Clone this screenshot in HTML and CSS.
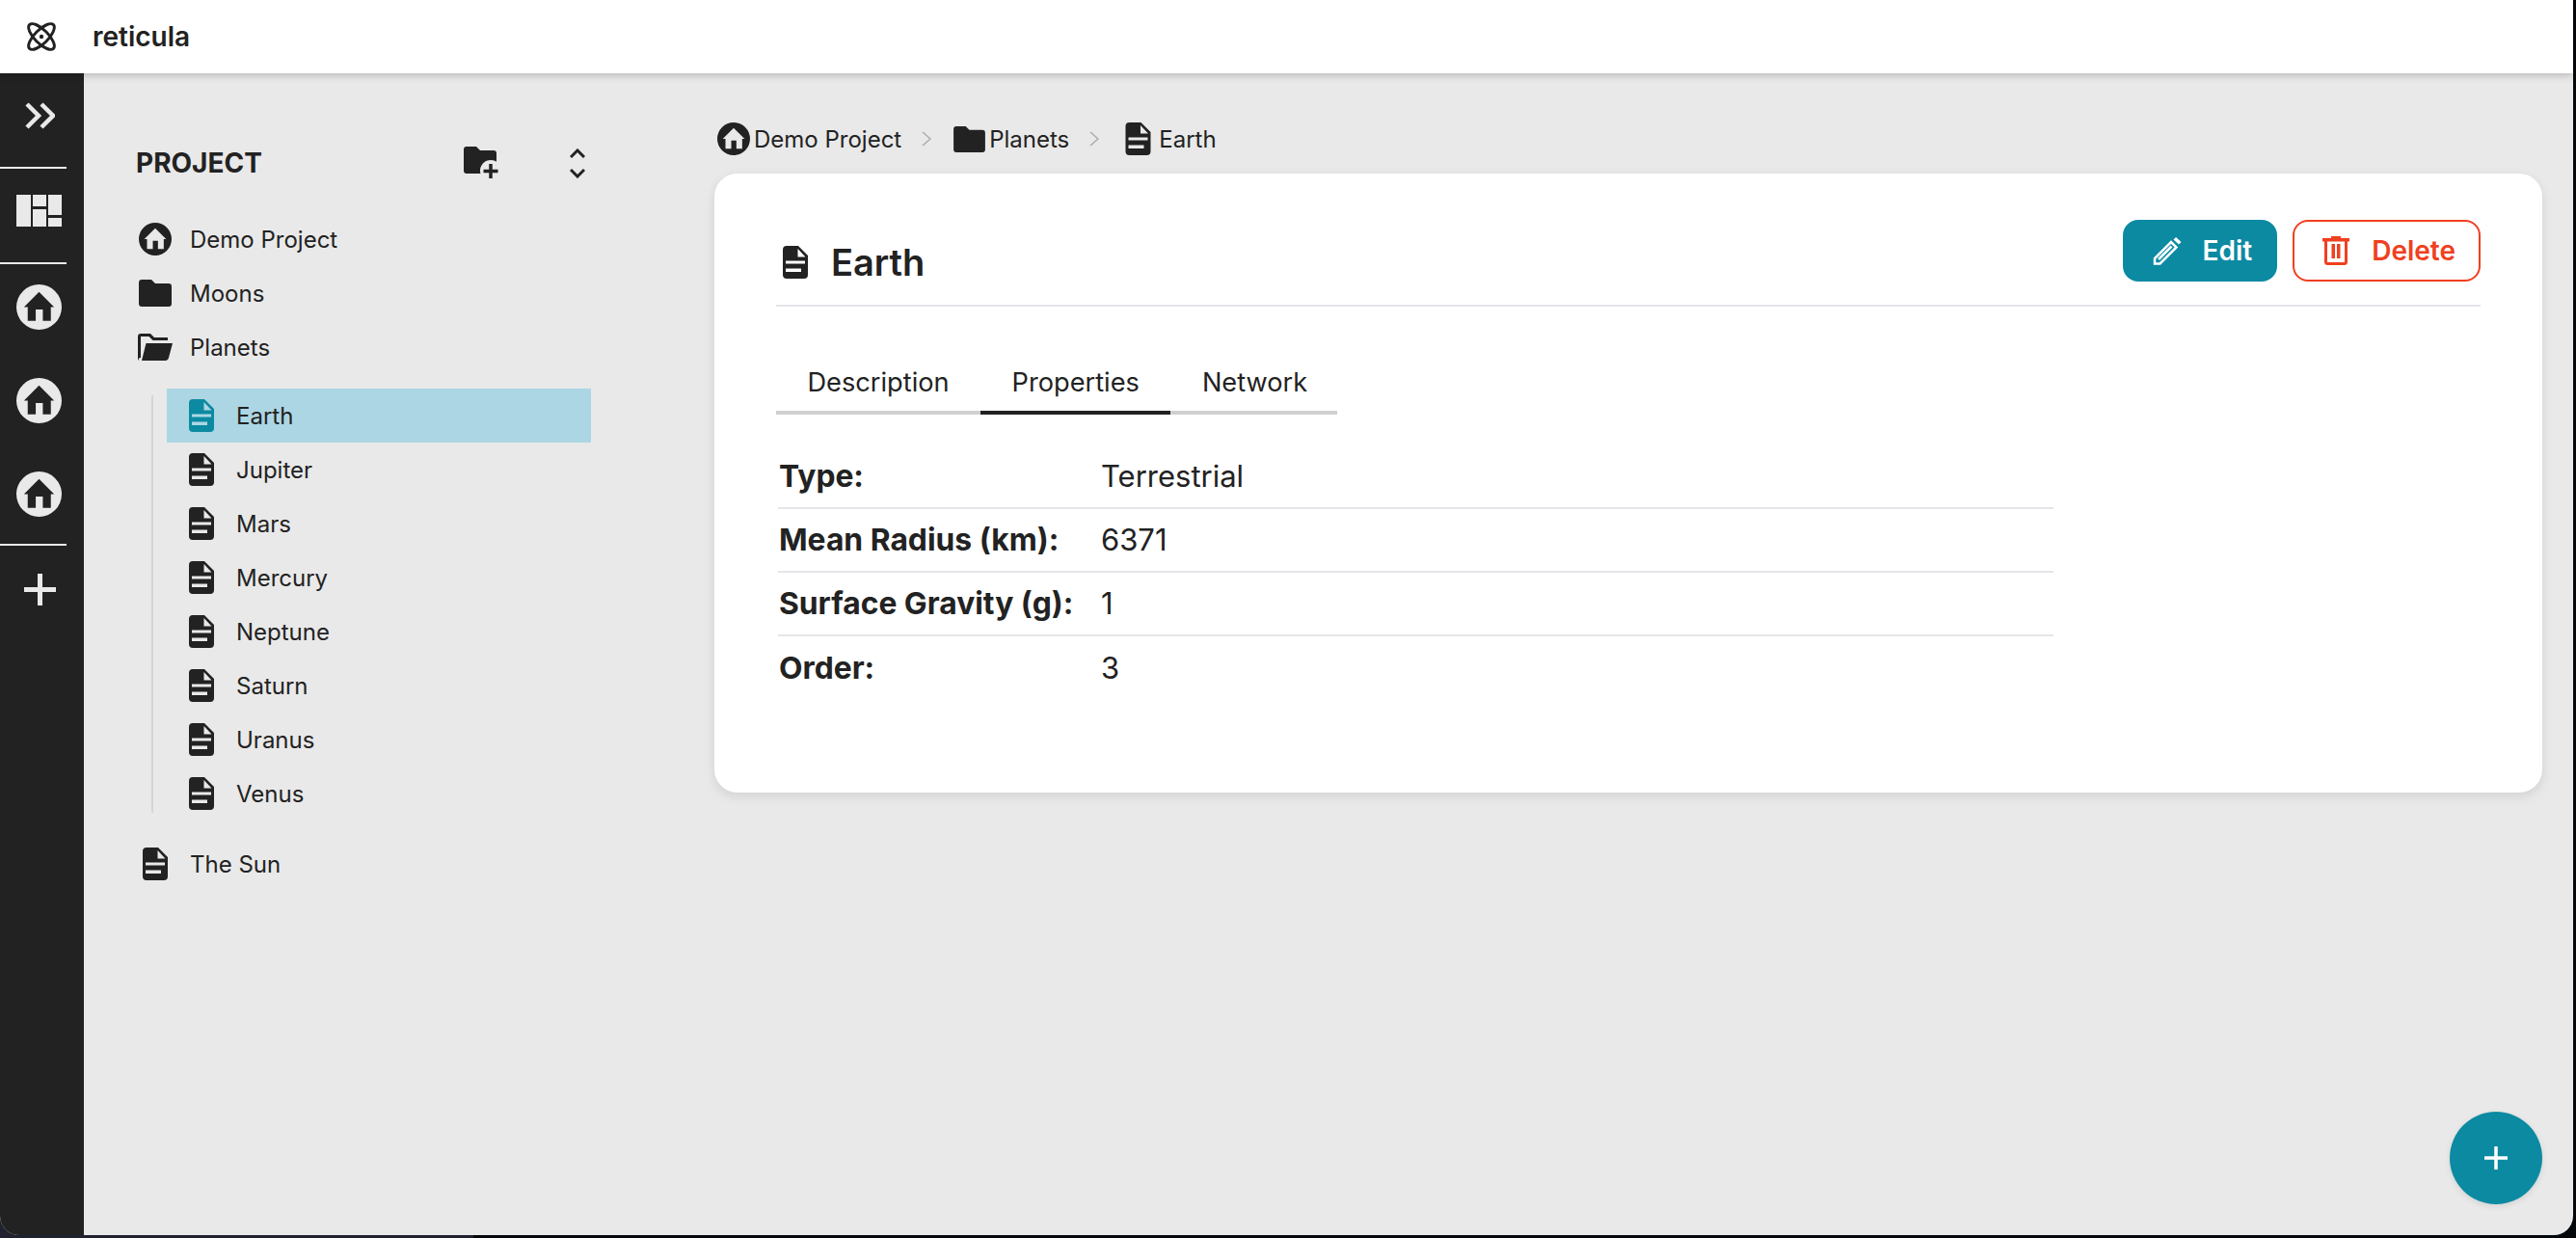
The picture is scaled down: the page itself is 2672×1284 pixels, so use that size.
FILE: index.html
```html
<!DOCTYPE html>
<html lang="en">
<head>
    <meta charset="UTF-8">
    <meta name="viewport" content="width=device-width, initial-scale=1.0">
    <title>reticula</title>
    <link rel="stylesheet" href="styles.css">
</head>
<body>
    <svg class="icon-defs" width="0" height="0">
        <symbol id="i-file" viewBox="0 0 26 34">
            <path fill="currentColor" fill-rule="evenodd" d="M4 0H16L26 10V30A4 4 0 0 1 22 34H4A4 4 0 0 1 0 30V4A4 4 0 0 1 4 0ZM15.500 3V11.500H23.500ZM3 15.500V18.500H23V15.500ZM3 23.500V27H19V23.500Z"/>
        </symbol>
        <symbol id="i-home" viewBox="0 0 48 48">
            <path fill="currentColor" fill-rule="evenodd" d="M24 0A24 24 0 1 1 24 48A24 24 0 1 1 24 0ZM24 8L8 24H12V38.500H20.500V26.500H28V38.500H36.500V24H40Z"/>
        </symbol>
        <symbol id="i-folder" viewBox="0 0 34 28">
            <path fill="currentColor" d="M3 0H13L17 4H31A3 3 0 0 1 34 7V25A3 3 0 0 1 31 28H3A3 3 0 0 1 0 25V3A3 3 0 0 1 3 0Z"/>
        </symbol>
        <symbol id="i-folder-open" viewBox="0 0 36 28">
            <path fill="currentColor" d="M3 0H13L17 4H31V7H15.500L11.500 3H3V25A1 1 0 0 0 2 28A2.500 2.500 0 0 1 0 25V3A3 3 0 0 1 3 0Z"/>
            <path fill="currentColor" d="M8.500 10H36L32 25A3.500 3.500 0 0 1 29 28H4Z"/>
        </symbol>
    </svg>

    <div class="window">
        <header class="topbar">
            <svg class="logo" viewBox="0 0 30 30">
                <ellipse cx="15" cy="15" rx="17.500" ry="7" transform="rotate(45 15 15)"/>
                <ellipse cx="15" cy="15" rx="17.500" ry="7" transform="rotate(-45 15 15)"/>
                <circle class="logo-dot" cx="15" cy="15" r="2.200"/>
            </svg>
            <span class="brand">reticula</span>
        </header>

        <div class="workspace">
            <nav class="rail">
                <div class="rail-section rail-toggle">
                    <svg class="rail-chevrons" viewBox="0 0 31 28"><path d="M2 2L14 14L2 26M17 2L29 14L17 26"/></svg>
                </div>
                <div class="rail-rule"></div>
                <div class="rail-section rail-boards">
                    <svg class="rail-grid" viewBox="0 0 47 33">
                        <rect x="0" y="0" width="15" height="33"/>
                        <rect x="17" y="0" width="14" height="12"/>
                        <rect x="17" y="15" width="14" height="18"/>
                        <rect x="33" y="0" width="14" height="21"/>
                        <rect x="33" y="24" width="14" height="9"/>
                    </svg>
                </div>
                <div class="rail-rule"></div>
                <div class="rail-section rail-projects">
                    <svg class="rail-home"><use href="#i-home"/></svg>
                    <svg class="rail-home"><use href="#i-home"/></svg>
                    <svg class="rail-home"><use href="#i-home"/></svg>
                </div>
                <div class="rail-rule"></div>
                <div class="rail-section rail-add">
                    <svg class="rail-plus" viewBox="0 0 33 33"><path d="M16.500 0V33M0 16.500H33"/></svg>
                </div>
            </nav>

            <aside class="tree-panel">
                <div class="tree-head">
                    <span class="tree-title">PROJECT</span>
                    <svg class="add-folder" viewBox="0 0 37 34">
                        <path class="add-folder-body" d="M3 0H13L17 4H31A3 3 0 0 1 34 7V25A3 3 0 0 1 31 28H3A3 3 0 0 1 0 25V3A3 3 0 0 1 3 0Z"/>
                        <circle class="add-folder-cut" cx="28" cy="25" r="11"/>
                        <path class="add-folder-plus" d="M28 18V33M20.500 25.500H35.500"/>
                    </svg>
                    <svg class="unfold" viewBox="0 0 16 31"><path d="M1 9L8 2L15 9M1 22L8 29L15 22"/></svg>
                </div>

                <ul class="tree">
                    <li class="tree-row"><span class="tree-icon"><svg class="ic-home"><use href="#i-home"/></svg></span>Demo Project</li>
                    <li class="tree-row"><span class="tree-icon"><svg class="ic-folder"><use href="#i-folder"/></svg></span>Moons</li>
                    <li class="tree-row"><span class="tree-icon"><svg class="ic-folder-open"><use href="#i-folder-open"/></svg></span>Planets</li>
                </ul>
                <ul class="subtree">
                    <li class="sub-row selected"><svg class="ic-file"><use href="#i-file"/></svg>Earth</li>
                    <li class="sub-row"><svg class="ic-file"><use href="#i-file"/></svg>Jupiter</li>
                    <li class="sub-row"><svg class="ic-file"><use href="#i-file"/></svg>Mars</li>
                    <li class="sub-row"><svg class="ic-file"><use href="#i-file"/></svg>Mercury</li>
                    <li class="sub-row"><svg class="ic-file"><use href="#i-file"/></svg>Neptune</li>
                    <li class="sub-row"><svg class="ic-file"><use href="#i-file"/></svg>Saturn</li>
                    <li class="sub-row"><svg class="ic-file"><use href="#i-file"/></svg>Uranus</li>
                    <li class="sub-row"><svg class="ic-file"><use href="#i-file"/></svg>Venus</li>
                </ul>
                <ul class="tree">
                    <li class="tree-row"><span class="tree-icon"><svg class="ic-file"><use href="#i-file"/></svg></span>The Sun</li>
                </ul>
            </aside>

            <main class="content">
                <div class="crumbs">
                    <svg class="ic-home"><use href="#i-home"/></svg>
                    <span>Demo Project</span>
                    <svg class="crumb-sep" viewBox="0 0 10 16"><path d="M1 1L9 8L1 15"/></svg>
                    <svg class="crumb-folder"><use href="#i-folder"/></svg>
                    <span>Planets</span>
                    <svg class="crumb-sep" viewBox="0 0 10 16"><path d="M1 1L9 8L1 15"/></svg>
                    <svg class="crumb-file"><use href="#i-file"/></svg>
                    <span>Earth</span>
                </div>

                <section class="card">
                    <div class="card-head">
                        <h1 class="card-title"><svg class="ic-file"><use href="#i-file"/></svg>Earth</h1>
                        <div class="card-actions">
                            <button class="btn btn-edit">
                                <svg class="btn-icon" viewBox="0 0 30 30">
                                    <path class="pencil-body" d="M2 28.500V23L19 6L24.500 11.500L7.500 28.500ZM6 24L19.500 10.500"/>
                                    <path class="pencil-cap" d="M21.500 3.500L24 1L29.500 6L27 8.500Z"/>
                                </svg>
                                Edit
                            </button>
                            <button class="btn btn-delete">
                                <svg class="btn-icon" viewBox="0 0 28 30">
                                    <path class="trash-fill" d="M9 0H19V2H28V5.500H0V2H9ZM9.500 8H13V23H9.500ZM15 8H18.500V23H15Z"/>
                                    <path class="trash-body" d="M3.500 5V26.500A2 2 0 0 0 5.500 28.500H22.500A2 2 0 0 0 24.500 26.500V5"/>
                                </svg>
                                Delete
                            </button>
                        </div>
                    </div>

                    <div class="tabs">
                        <div class="tab">Description</div>
                        <div class="tab active">Properties</div>
                        <div class="tab">Network</div>
                    </div>

                    <div class="props">
                        <div class="prop"><span class="prop-label">Type:</span><span>Terrestrial</span></div>
                        <div class="prop"><span class="prop-label">Mean Radius (km):</span><span>6371</span></div>
                        <div class="prop"><span class="prop-label">Surface Gravity (g):</span><span>1</span></div>
                        <div class="prop"><span class="prop-label">Order:</span><span>3</span></div>
                    </div>
                </section>
            </main>

            <button class="fab">
                <svg viewBox="0 0 24 24"><path d="M12 0V24M0 12H24"/></svg>
            </button>
        </div>
    </div>
</body>
</html>
```

FILE: styles.css
```css
* {
    box-sizing: border-box;
}
html, body {
    height: 100%;
}
body {
    margin: 0;
    overflow: hidden;
    font-family: Inter, "Liberation Sans", sans-serif;
    color: #222222;
    background: linear-gradient(to right, #20222f 491px, #05080b 491px);
}
ul {
    list-style: none;
    margin: 0;
    padding: 0;
}
svg {
    display: block;
    flex: none;
}
.icon-defs {
    position: absolute;
}

.window {
    width: 2669px;
    height: 1281px;
    display: flex;
    flex-direction: column;
    background-color: #e9e9e9;
    border-radius: 0 0 20px 20px;
    overflow: hidden;
}

/* top bar */
.topbar {
    height: 76px;
    flex: none;
    display: flex;
    align-items: center;
    gap: 38px;
    padding-left: 28px;
    background-color: white;
    box-shadow: 0 2px 8px rgba(0, 0, 0, 0.22);
    position: relative;
    z-index: 2;
}
.logo {
    width: 30px;
    height: 30px;
    overflow: visible;
    fill: none;
    stroke: #222222;
    stroke-width: 3;
}
.logo-dot {
    fill: #222222;
    stroke: none;
}
.brand {
    font-size: 28px;
    font-weight: 600;
}

.workspace {
    flex: 1;
    display: flex;
    position: relative;
    min-height: 0;
}

/* dark icon rail */
.rail {
    width: 87px;
    flex: none;
    background-color: #222222;
    color: #e9e9ea;
}
.rail-section {
    display: flex;
    flex-direction: column;
    padding-left: 17px;
}
.rail-rule {
    width: 69px;
    height: 2px;
    background-color: #e9e9ea;
}
.rail-toggle {
    padding: 30px 0 39px 26px;
}
.rail-chevrons {
    width: 31px;
    height: 28px;
    fill: none;
    stroke: #e9e9ea;
    stroke-width: 4.500;
}
.rail-boards {
    padding-top: 27px;
    padding-bottom: 37px;
}
.rail-grid {
    width: 47px;
    height: 33px;
    fill: #e9e9ea;
}
.rail-projects {
    gap: 50px;
    padding-top: 21px;
    padding-bottom: 28px;
}
.rail-home {
    width: 47px;
    height: 47px;
}
.rail-add {
    padding: 29px 0 0 25px;
}
.rail-plus {
    width: 33px;
    height: 33px;
    fill: none;
    stroke: #e9e9ea;
    stroke-width: 5;
}

/* project tree */
.tree-panel {
    width: 654px;
    flex: none;
    padding: 65px 128px 0 55px;
}
.tree-head {
    height: 56px;
    display: flex;
    align-items: center;
    margin-bottom: 23px;
}
.tree-title {
    flex: 1;
    margin-left: -1px;
    font-size: 28px;
    font-weight: 700;
}
.add-folder {
    width: 37px;
    height: 34px;
    margin-right: 73px;
    overflow: visible;
}
.add-folder-body {
    fill: #222222;
}
.add-folder-cut {
    fill: #e9e9e9;
}
.add-folder-plus {
    fill: none;
    stroke: #222222;
    stroke-width: 3.500;
}
.unfold {
    width: 16px;
    height: 31px;
    margin-right: 6px;
    fill: none;
    stroke: #222222;
    stroke-width: 3;
}
.tree-row {
    height: 56px;
    display: flex;
    align-items: center;
    gap: 17px;
    font-size: 24px;
}
.tree-icon {
    width: 38px;
    display: flex;
    justify-content: center;
}
.ic-home {
    width: 34px;
    height: 34px;
}
.ic-folder {
    width: 34px;
    height: 28px;
}
.ic-folder-open {
    width: 36px;
    height: 28px;
}
.ic-file {
    width: 26px;
    height: 34px;
}
.subtree {
    position: relative;
    margin: 15px 0 17px 31px;
}
.subtree::before {
    content: "";
    position: absolute;
    left: -16px;
    top: 7px;
    bottom: 8px;
    width: 2px;
    background-color: #d4d4d4;
}
.sub-row {
    height: 56px;
    display: flex;
    align-items: center;
    gap: 23px;
    padding-left: 23px;
    font-size: 24px;
}
.sub-row.selected {
    background-color: #acd6e3;
}
.sub-row.selected svg {
    color: #0c8aa2;
}

/* breadcrumbs + card */
.content {
    flex: 1;
    min-width: 0;
    padding: 50px 32px 0 0;
}
.crumbs {
    height: 36px;
    display: flex;
    align-items: center;
    gap: 4px;
    padding-left: 3px;
    margin-bottom: 18px;
    font-size: 24px;
}
.crumb-sep {
    width: 10px;
    height: 16px;
    margin: 0 19px 0 17px;
    fill: none;
    stroke: #aaaaaa;
    stroke-width: 1.500;
}
.crumb-folder {
    width: 33px;
    height: 27px;
}
.crumb-file {
    width: 27px;
    height: 34px;
    margin: 0 4px;
}
.card {
    height: 642px;
    padding: 48px 64px 0;
    background-color: white;
    border-radius: 24px;
    box-shadow: 0 4px 12px rgba(0, 0, 0, 0.1);
}
.card-head {
    display: flex;
    align-items: center;
    justify-content: space-between;
    padding-bottom: 24px;
    border-bottom: 2px solid #e5e5ea;
}
.card-title {
    display: flex;
    align-items: center;
    gap: 24px;
    margin: 24px 0 0 7px;
    font-size: 38px;
    font-weight: 600;
    line-height: 1;
}
.card-actions {
    display: flex;
    gap: 16px;
}
.btn {
    height: 64px;
    display: flex;
    align-items: center;
    gap: 22px;
    font-family: inherit;
    font-size: 28px;
    font-weight: 600;
    border-radius: 16px;
}
.btn-icon {
    width: 30px;
    height: 30px;
}
.btn-edit {
    padding: 0 26px 0 31px;
    color: white;
    background-color: #0c8aa2;
    border: none;
}
.pencil-body {
    fill: none;
    stroke: white;
    stroke-width: 2.500;
}
.pencil-cap {
    fill: white;
}
.btn-delete {
    gap: 23px;
    padding: 0 24px 0 29px;
    color: #f04020;
    background-color: white;
    border: 2px solid #f04020;
}
.btn-delete .btn-icon {
    width: 28px;
}
.trash-fill {
    fill: #f04020;
}
.trash-body {
    fill: none;
    stroke: #f04020;
    stroke-width: 3;
}

.tabs {
    width: 582px;
    display: flex;
    margin-top: 46px;
    border-bottom: 4px solid #d0d0d0;
}
.tab {
    height: 62px;
    padding: 0 32.500px;
    font-size: 27.200px;
    line-height: 66px;
}
.tab.active {
    height: 66px;
    margin-bottom: -4px;
    border-bottom: 4px solid #222222;
}

.props {
    width: 1323px;
    margin: 32px 0 0 2px;
}
.prop {
    height: 66px;
    display: flex;
    align-items: center;
    padding-left: 1px;
    font-size: 31px;
    line-height: 62px;
    border-bottom: 2px solid #e5e5ea;
}
.prop:last-child {
    border-bottom: none;
}
.prop-label {
    width: 334px;
    font-size: 31.800px;
    font-weight: 700;
}

.fab {
    position: absolute;
    right: 32px;
    bottom: 32px;
    width: 96px;
    height: 96px;
    display: flex;
    align-items: center;
    justify-content: center;
    padding: 0;
    background-color: #0c8aa2;
    border: none;
    border-radius: 50%;
    box-shadow: 0 2px 6px rgba(0, 0, 0, 0.1);
}
.fab svg {
    width: 24px;
    height: 24px;
    fill: none;
    stroke: white;
    stroke-width: 3.500;
}
```
